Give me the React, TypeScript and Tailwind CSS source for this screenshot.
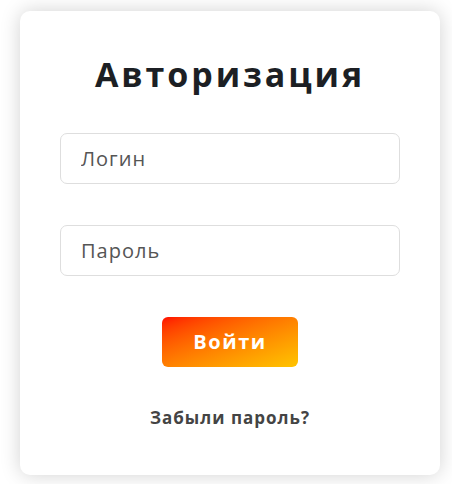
export default function App() {
  return (
    <div className="min-h-screen bg-white px-5 pt-[11px] font-['Open_Sans',sans-serif]">
      <div className="flex w-[420px] flex-col items-center rounded-[10px] bg-white px-10 pb-[46px] pt-[41px] shadow-[0_0_20px_rgba(0,0,0,0.18)]">
        <h1 className="text-[34px] font-bold leading-[44px] tracking-[2.9px] text-[#1c1f24]">Авторизация</h1>
        <input
          className="mt-[37px] h-[51px] w-full rounded-[7px] border border-[#dedede] px-5 text-[20px] tracking-[1px] text-[#444] outline-none placeholder:text-[#555]"
          placeholder="Логин"
        />
        <input
          className="mt-[41px] h-[51px] w-full rounded-[7px] border border-[#dedede] px-5 text-[20px] tracking-[1px] text-[#444] outline-none placeholder:text-[#555]"
          placeholder="Пароль"
        />
        <button className="mt-[41px] h-[50px] w-[136px] rounded-[6px] bg-gradient-to-br from-[#ff0000] to-[#ffc400] text-[20px] font-bold tracking-[1.6px] text-white">
          Войти
        </button>
        <a href="#" className="mt-[40px] text-[17px] font-bold leading-[22px] tracking-[1px] text-[#444]">
          Забыли пароль?
        </a>
      </div>
    </div>
  );
}
